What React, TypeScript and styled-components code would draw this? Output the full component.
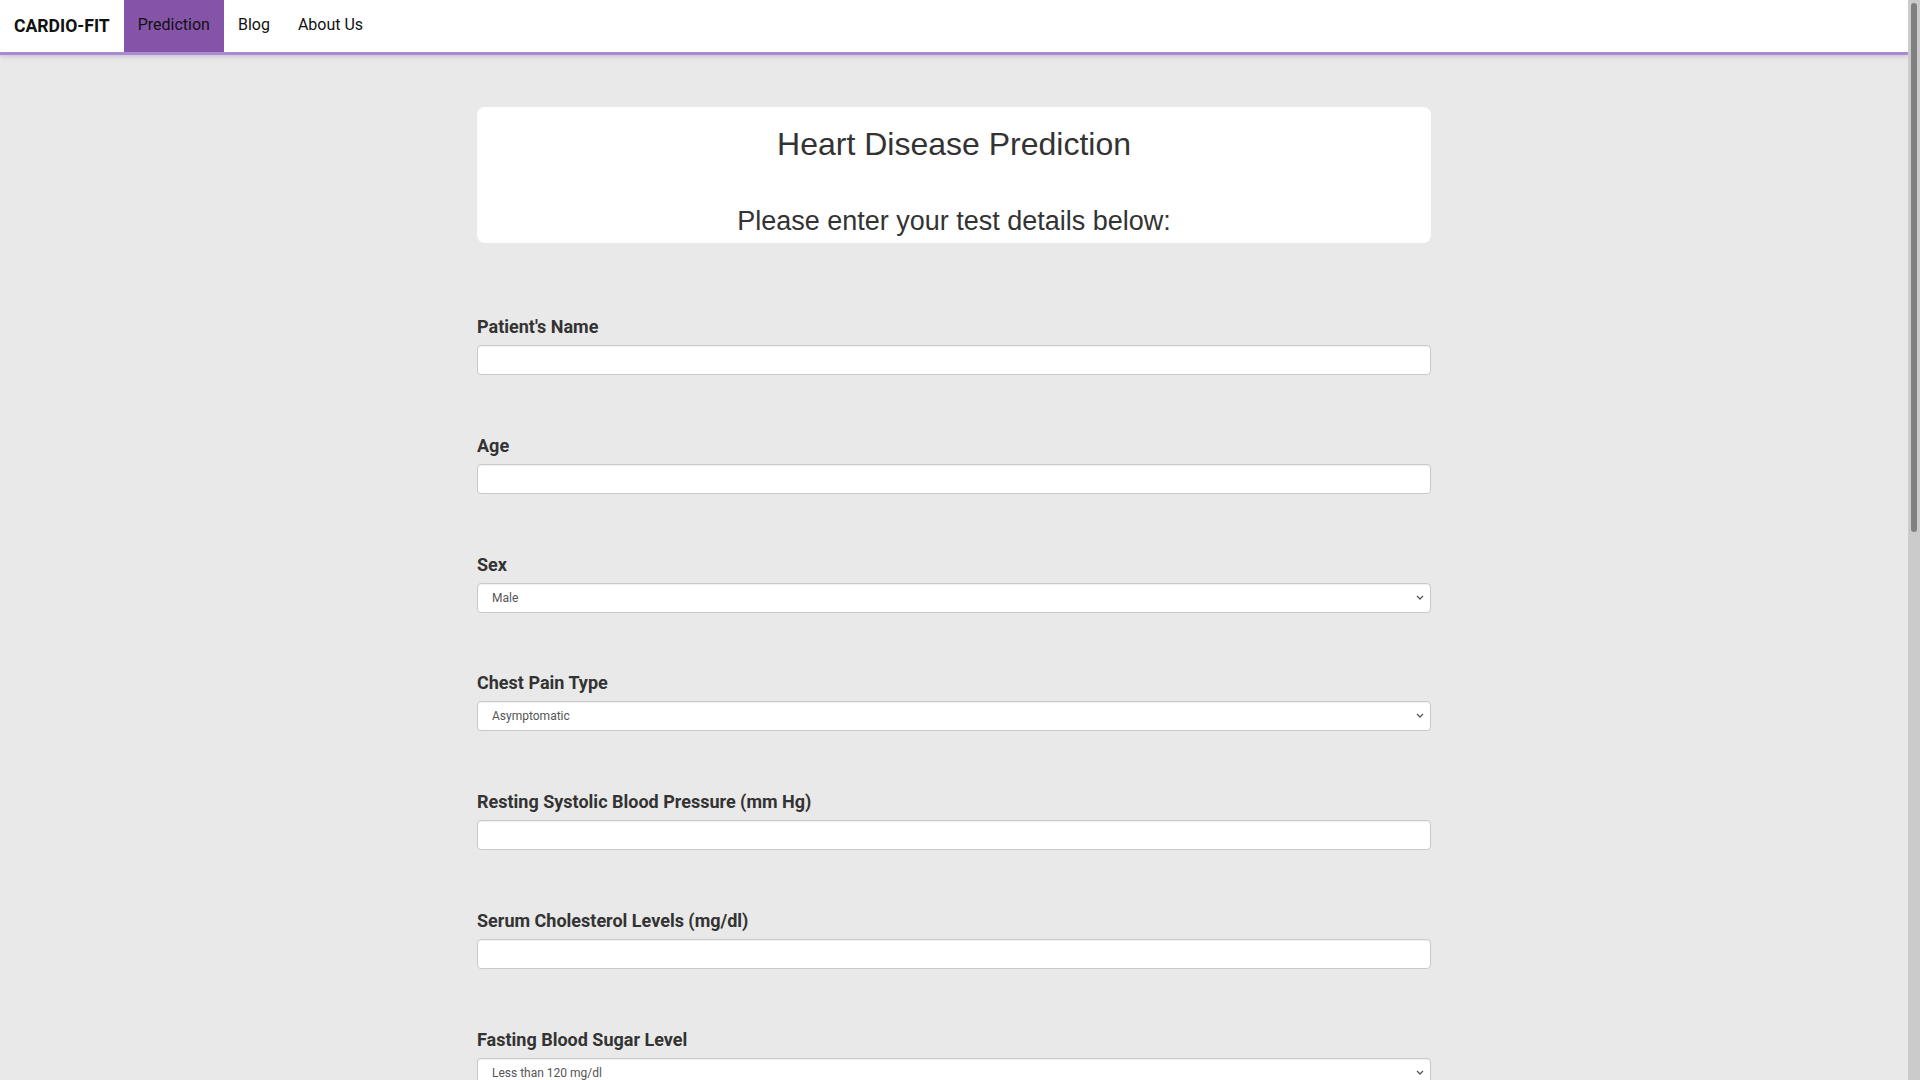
import * as React from "react";
import styled, { createGlobalStyle } from "styled-components";

const GlobalStyle = createGlobalStyle`
  html, body {
    margin: 0;
    padding: 0;
    background: #e9e9e9;
  }
  body {
    font-family: Roboto, "Liberation Sans", Arial, sans-serif;
  }
`;

// page area leaves room for the scrollbar on the right
const Page = styled.div`
  margin-right: 12px;
`;

const ScrollTrack = styled.div`
  position: fixed;
  top: 0;
  right: 0;
  bottom: 0;
  width: 12px;
  background: #cbcbcb;
  z-index: 10;
`;
const ScrollThumb = styled.div`
  margin: 3px 3px 0 3px;
  height: 529px;
  border-radius: 3px;
  background: #808080;
`;

const Nav = styled.nav`
  display: flex;
  align-items: stretch;
  height: 52px;
  background: #fff;
  border-bottom: 3px solid #a98cd0;
  box-shadow: 0 2px 4px rgba(133, 84, 168, 0.25);
`;
const Brand = styled.a`
  display: flex;
  align-items: center;
  padding: 0 14px;
  font-size: 17.6px;
  font-weight: 700;
  color: #111;
  text-decoration: none;
`;
const NavLink = styled.a<{ $active?: boolean }>`
  display: flex;
  align-items: center;
  padding: 0 14px 3px;
  font-size: 16px;
  color: #111;
  text-decoration: none;
  background: ${(p) => (p.$active ? "#8554a8" : "transparent")};
`;

const Main = styled.main`
  width: 50%;
  margin: 52px auto 0;
  padding-bottom: 80px;
`;

const HeaderCard = styled.header`
  background: #fff;
  border-radius: 8px;
  padding: 19px 0 6px;
  text-align: center;
  color: #333;
  font-family: "Liberation Sans", Arial, sans-serif;
`;
const Title = styled.h1`
  font-size: 32px;
  font-weight: 400;
  margin: 0 0 43px;
`;
const Subtitle = styled.h2`
  font-size: 27px;
  font-weight: 400;
  margin: 0;
`;

const Form = styled.form`
  display: flex;
  flex-direction: column;
  gap: 59.77px;
  margin-top: 73px;
`;
const Field = styled.div`
  display: flex;
  flex-direction: column;
`;
const Label = styled.label`
  font-size: 18px;
  line-height: 22px;
  font-weight: 700;
  color: #333;
  margin-bottom: 7px;
`;
const Input = styled.input`
  box-sizing: border-box;
  height: 30px;
  width: 100%;
  border: 1px solid #c9c9c9;
  border-radius: 4px;
  background: #fff;
  box-shadow: inset 0 1px 1px rgba(0, 0, 0, 0.06);
  padding: 0 14px;
  font: 12px Roboto, sans-serif;
  color: #555;
  outline: none;
`;
const SelectWrap = styled.div`
  position: relative;
`;
const Select = styled.select`
  appearance: none;
  box-sizing: border-box;
  height: 30px;
  width: 100%;
  border: 1px solid #c9c9c9;
  border-radius: 4px;
  background: #fff;
  box-shadow: inset 0 1px 1px rgba(0, 0, 0, 0.06);
  padding: 0 14px;
  font: 12px Roboto, sans-serif;
  color: #555;
  outline: none;
`;
const Chevron = styled.svg`
  position: absolute;
  right: 7px;
  top: 12px;
  pointer-events: none;
`;

const SubmitButton = styled.button`
  align-self: flex-start;
  padding: 10px 28px;
  border: 0;
  border-radius: 4px;
  background: #8554a8;
  color: #fff;
  font: 500 16px Roboto, sans-serif;
`;

type FieldDef =
  | { label: string; kind: "input" }
  | { label: string; kind: "select"; options: string[] };

const FIELDS: FieldDef[] = [
  { label: "Patient's Name", kind: "input" },
  { label: "Age", kind: "input" },
  { label: "Sex", kind: "select", options: ["Male", "Female"] },
  {
    label: "Chest Pain Type",
    kind: "select",
    options: ["Asymptomatic", "Typical Angina", "Atypical Angina", "Non-anginal Pain"],
  },
  { label: "Resting Systolic Blood Pressure (mm Hg)", kind: "input" },
  { label: "Serum Cholesterol Levels (mg/dl)", kind: "input" },
  {
    label: "Fasting Blood Sugar Level",
    kind: "select",
    options: ["Less than 120 mg/dl", "Greater than 120 mg/dl"],
  },
  {
    label: "Resting ECG Results",
    kind: "select",
    options: ["Normal", "ST-T Wave Abnormality", "Left Ventricular Hypertrophy"],
  },
  { label: "Maximum Heart Rate Achieved", kind: "input" },
  { label: "Exercise Induced Angina", kind: "select", options: ["No", "Yes"] },
  { label: "ST Depression Induced by Exercise", kind: "input" },
  {
    label: "Slope of Peak Exercise ST Segment",
    kind: "select",
    options: ["Upsloping", "Flat", "Downsloping"],
  },
  { label: "Number of Major Vessels", kind: "select", options: ["0", "1", "2", "3"] },
  {
    label: "Thalassemia",
    kind: "select",
    options: ["Normal", "Fixed Defect", "Reversible Defect"],
  },
];

function App() {
  return (
    <>
      <GlobalStyle />
      <Page>
        <Nav>
          <Brand href="#">CARDIO-FIT</Brand>
          <NavLink href="#" $active>
            Prediction
          </NavLink>
          <NavLink href="#">Blog</NavLink>
          <NavLink href="#">About Us</NavLink>
        </Nav>
        <Main>
          <HeaderCard>
            <Title>Heart Disease Prediction</Title>
            <Subtitle>Please enter your test details below:</Subtitle>
          </HeaderCard>
          <Form onSubmit={(e) => e.preventDefault()}>
            {FIELDS.map((f, i) => (
              <Field key={f.label}>
                <Label htmlFor={`f${i}`}>{f.label}</Label>
                {f.kind === "input" ? (
                  <Input id={`f${i}`} type="text" />
                ) : (
                  <SelectWrap>
                    <Select id={`f${i}`} defaultValue={f.options[0]}>
                      {f.options.map((o) => (
                        <option key={o}>{o}</option>
                      ))}
                    </Select>
                    <Chevron width="8" height="5" viewBox="0 0 8 5">
                      <path d="M1 1l3 3 3-3" fill="none" stroke="#555" strokeWidth="1.3" />
                    </Chevron>
                  </SelectWrap>
                )}
              </Field>
            ))}
            <SubmitButton type="submit">Predict</SubmitButton>
          </Form>
        </Main>
      </Page>
      <ScrollTrack>
        <ScrollThumb />
      </ScrollTrack>
    </>
  );
}

export default App;
